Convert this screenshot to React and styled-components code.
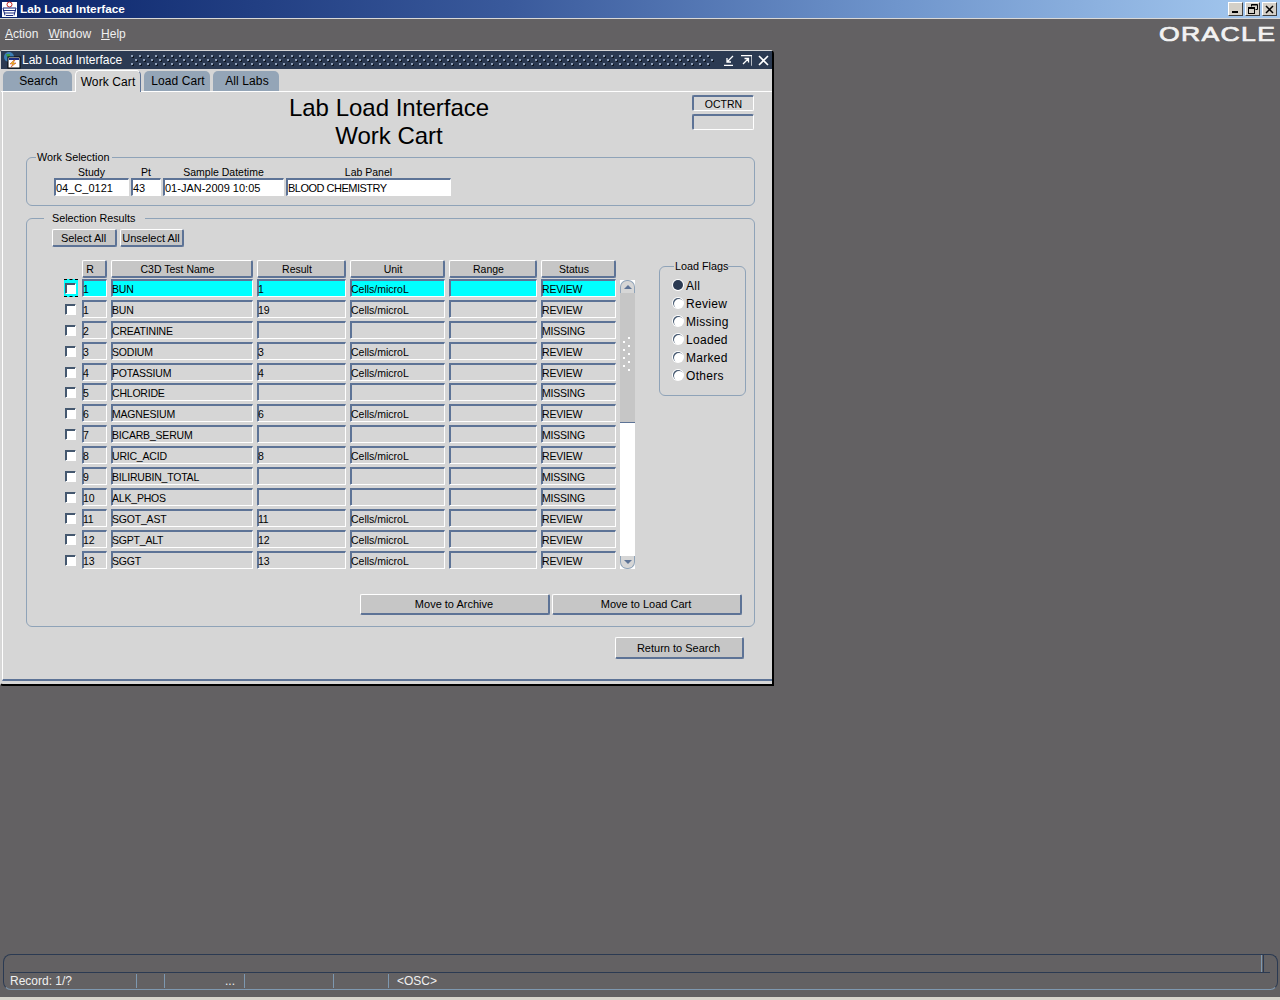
import React from 'react'
import styled, { createGlobalStyle } from 'styled-components'

const colors = {
  desktop: '#636163',
  panel: '#d6d6d6',
  button: '#c6c6c6',
  bevel: '#5d7396',
  line: '#8fa3b8',
  navy: '#2b3a52',
}

const GlobalStyle = createGlobalStyle`
  html, body { margin: 0; padding: 0; background: ${colors.desktop}; }
  body { font-family: "Liberation Sans", Arial, sans-serif; font-size: 11px; color: #000; }
  * { box-sizing: border-box; }
`

const Screen = styled.div`
  width: 1280px;
  height: 1000px;
  display: flex;
  flex-direction: column;
  background: ${colors.desktop};
  overflow: hidden;
`

const TitleBar = styled.div`
  height: 18px;
  flex: none;
  display: flex;
  align-items: center;
  padding-left: 1px;
  color: #fff;
  font-size: 11.8px;
  font-weight: bold;
  background: linear-gradient(90deg, #0a246a 0%, #3a5a9c 40%, #6f95cc 70%, #a6caf0 100%);
`

const TitleText = styled.span`
  margin-left: 2px;
  flex: 1;
`

const WinButtons = styled.div`
  display: flex;
  margin-right: 3px;
`

const WinButton = styled.div`
  width: 15px;
  height: 14px;
  margin-left: 2px;
  background: #d4d0c8;
  border: 1px solid;
  border-color: #fff #404040 #404040 #fff;
  display: flex;
  align-items: center;
  justify-content: center;
  svg { display: block; }
`

const MenuRow = styled.div`
  height: 32px;
  flex: none;
  display: flex;
  align-items: center;
  justify-content: space-between;
  padding: 0 4px 2px 5px;
  border-top: 1px solid #d8d8d8;
`

const Menu = styled.div`
  display: flex;
  gap: 10px;
  color: #f0f0f0;
  font-size: 12px;
  u { text-underline-offset: 1px; }
`

const OracleMark = styled.span`
  display: block;
  font-size: 20px;
  line-height: 18px;
  letter-spacing: 1px;
  color: #f2f2f2;
  -webkit-text-stroke: 0.7px #f2f2f2;
  transform: scaleX(1.33);
  transform-origin: right center;
`

const Desktop = styled.div`
  flex: 1;
  min-height: 0;
`

const FormWindow = styled.div`
  width: 774px;
  height: 636px;
  display: flex;
  flex-direction: column;
  background: ${colors.panel};
  border: 1px solid #d8d8d8;
  border-right: 2px solid #000;
  border-bottom: 2px solid #000;
  border-radius: 3px 4px 0 3px;
`

const WindowHeader = styled.div`
  height: 18px;
  flex: none;
  display: flex;
  align-items: center;
  padding: 0 3px 0 2px;
  background: ${colors.navy};
  color: #fff;
  font-size: 12px;
`

const HeaderTitle = styled.span`
  margin-left: 1px;
  white-space: nowrap;
`

const Gripper = styled.div`
  flex: 1;
  height: 12px;
  margin: 0 10px 0 9px;
  background-image:
    radial-gradient(circle at 1px 2px, #8fa0b8 1px, transparent 1px),
    radial-gradient(circle at 5px 6px, #8fa0b8 1px, transparent 1px),
    radial-gradient(circle at 2px 3px, #0f1722 1px, transparent 1px),
    radial-gradient(circle at 6px 7px, #0f1722 1px, transparent 1px);
  background-size: 8px 8px;
`

const HeaderIcons = styled.div`
  display: flex;
  align-items: center;
  gap: 6px;
  svg { display: block; }
`

const TabStrip = styled.div`
  height: 23px;
  flex: none;
  display: flex;
  align-items: flex-end;
  padding: 0 0 0 2px;
  gap: 3px;
  border-bottom: 1px solid #fff;
  background: ${colors.panel};
`

const Tab = styled.div`
  height: ${p => (p.$active ? '22px' : '20px')};
  width: ${p => p.$w}px;
  margin-bottom: ${p => (p.$active ? '-1px' : '0')};
  padding-left: ${p => (p.$active ? '0' : '2px')};
  display: flex;
  align-items: center;
  justify-content: center;
  font-size: 12px;
  letter-spacing: 0.1px;
  border-radius: 5px 5px 0 0;
  background: ${p => (p.$active ? colors.panel : '#94a5b7')};
  border-top: ${p => (p.$active ? '1px solid #fff' : 'none')};
  border-left: ${p => (p.$active ? '1px solid #fff' : 'none')};
  border-right: ${p => (p.$active ? `1px solid ${colors.bevel}` : 'none')};
`

const FormBody = styled.div`
  flex: 1;
  position: relative;
  display: flex;
  flex-direction: column;
  padding: 0 17px 0 23px;
  border-left: 1px solid #fff;
  margin-left: 1px;
  border-bottom: 2px solid ${colors.bevel};
  margin-bottom: 3px;
`

const Heading = styled.div`
  height: 59px;
  flex: none;
  display: flex;
  align-items: flex-start;
  padding-top: 2px;
`

const HeadingText = styled.div`
  width: 726px;
  text-align: center;
  font-size: 24px;
  line-height: 28px;
`

const SideBoxes = styled.div`
  position: absolute;
  top: 3px;
  left: 689px;
  display: flex;
  flex-direction: column;
  gap: 3px;
`

const SideBox = styled.div`
  width: 62px;
  height: 16px;
  display: flex;
  align-items: center;
  justify-content: center;
  font-size: 10.5px;
  border-style: solid;
  border-width: 2px 1px 1px 2px;
  border-color: ${colors.bevel} #fff #fff ${colors.bevel};
  border-radius: 2px;
`

const Group = styled.fieldset`
  margin: ${p => p.$top || 0}px 0 0;
  width: ${p => p.$w}px;
  height: ${p => p.$h}px;
  padding: 0;
  flex: none;
  border: 1px solid ${colors.line};
  border-radius: 6px;
`

const Legend = styled.legend`
  margin-left: ${p => p.$indent}px;
  padding: 0 ${p => p.$pad}px 0 ${p => p.$left || 1}px;
  font-size: 10.8px;
  line-height: 13px;
`

const WorkGrid = styled.div`
  display: grid;
  grid-template-columns: 75px 30px 121px 165px;
  column-gap: 2px;
  margin: 1px 0 0 27px;
`

const FieldLabel = styled.div`
  text-align: center;
  font-size: 10.5px;
  line-height: 14px;
  height: 13px;
`

const InputBox = styled.div`
  height: 18px;
  background: #fff;
  display: flex;
  align-items: center;
  font-size: 11px;
  letter-spacing: ${p => (p.$caps ? '-0.5px' : '0')};
  white-space: nowrap;
  overflow: hidden;
  border-style: solid;
  border-width: 2px 1px 1px 2px;
  border-color: ${colors.bevel} #fff #fff ${colors.bevel};
`

const ResultsTop = styled.div`
  display: flex;
  gap: 3px;
  margin: 4px 0 0 25px;
`

const Button = styled.button`
  font-family: inherit;
  font-size: 11px;
  color: #000;
  padding: 0 1px 0 0;
  width: ${p => p.$w}px;
  height: ${p => p.$h}px;
  background: ${colors.button};
  border-style: solid;
  border-width: 1px 2px 2px 1px;
  border-color: #fff ${colors.bevel} ${colors.bevel} #fff;
  border-radius: 2px;
`

const ResultsBody = styled.div`
  display: flex;
  margin: 15px 0 0 37px;
  align-items: flex-start;
`

const TableGrid = styled.div`
  display: grid;
  grid-template-columns: 14px 25px 142px 89px 95px 88px 75px;
  grid-template-rows: 14px repeat(4, 18px) 17px repeat(9, 18px);
  column-gap: 4px;
  row-gap: 3px;
`

const HeadCell = styled(Button)`
  width: auto;
  height: 18px;
  margin-top: -2px;
  padding-right: 8px;
  font-size: 10.5px;
`

const CheckCell = styled.div`
  display: flex;
  align-items: center;
  padding-left: 1px;
  width: 14px;
  height: 18px;
  ${p => p.$focus && `
    background: #00ffff;
    border-top: 1px dashed #000;
    border-bottom: 1px dashed #000;
  `}
`

const Check = styled.span`
  display: block;
  width: 11px;
  height: 11px;
  background: #fff;
  border-style: solid;
  border-width: 1px;
  border-color: #45586f #fff #fff #45586f;
  box-shadow: inset 1px 1px 0 #45586f;
`

const Cell = styled.div`
  height: 18px;
  display: flex;
  align-items: center;
  font-size: 10.5px;
  letter-spacing: ${p => (p.$plain ? '0' : '-0.2px')};
  white-space: nowrap;
  overflow: hidden;
  background: ${p => (p.$current ? '#00ffff' : colors.panel)};
  border-style: solid;
  border-width: 2px 1px 1px 1px;
  border-color: ${colors.bevel} #fff #fff ${colors.bevel};
  box-shadow: inset 1px 0 0 ${colors.bevel};
`

const Scroller = styled.div`
  width: 15px;
  height: 289px;
  margin: 18px 0 0 4px;
  display: flex;
  flex-direction: column;
  background: #fff;
  flex: none;
`

const ScrollEnd = styled.div`
  height: 13px;
  flex: none;
  display: flex;
  align-items: center;
  justify-content: center;
  background: ${colors.panel};
  border: 1px solid ${colors.line};
  border-width: ${p => (p.$up ? '1px 1px 0 1px' : '0 1px 1px 1px')};
  border-radius: ${p => (p.$up ? '7px 7px 0 0' : '0 0 7px 7px')};
`

const Arrow = styled.span`
  width: 0;
  height: 0;
  border-left: 4px solid transparent;
  border-right: 4px solid transparent;
  ${p => (p.$up ? `border-bottom: 4px solid ${colors.bevel};` : `border-top: 4px solid ${colors.bevel};`)}
`

const Thumb = styled.div`
  height: 130px;
  flex: none;
  position: relative;
  background: ${colors.button};
  border-bottom: 1px solid ${colors.bevel};
`

const ThumbDots = styled.div`
  position: absolute;
  left: 3px;
  top: 44px;
  width: 8px;
  height: 34px;
  background:
    radial-gradient(circle at 1px 5px, #fff 1px, transparent 1px) 0 0 / 10px 8px,
    radial-gradient(circle at 6px 1px, #fff 1px, transparent 1px) 0 0 / 10px 8px;
`

const ScrollTrack = styled.div`
  flex: 1;
  background: #fff;
`

const FlagsGroup = styled(Group)`
  margin: -2px 0 0 24px;
  padding: 4px 0 0 13px;
  display: block;
`

const FlagRow = styled.div`
  height: 18px;
  display: flex;
  align-items: center;
  gap: 3px;
  font-size: 12px;
  letter-spacing: 0.3px;
`

const Radio = styled.span`
  width: 10px;
  height: 10px;
  flex: none;
  margin-top: -3px;
  border-radius: 50%;
  background: ${p => (p.$on ? colors.navy : '#fff')};
  box-shadow: ${p => (p.$on ? '0 0 0 1px #fff' : 'inset 1px 1px 0 #45586f, 0 0 0 1px #fff')};
`

const MoveRow = styled.div`
  display: flex;
  gap: 2px;
  margin: 25px 0 0 333px;
`

const ReturnRow = styled.div`
  display: flex;
  margin: 10px 0 0 589px;
`

const StatusWrap = styled.div`
  flex: none;
  height: 36px;
  margin: 0 2px 7px 3px;
  display: flex;
  flex-direction: column;
  border: 1px solid ${colors.navy};
  border-bottom: 1px solid #7e98b0;
  border-radius: 8px;
`

const StatusTop = styled.div`
  height: 18px;
  flex: none;
  display: flex;
  justify-content: flex-end;
  padding-right: 6px;
  margin: 0 7px 0 6px;
  border-bottom: 1px solid ${colors.navy};
`

const StatusGrip = styled.div`
  width: 3px;
  height: 17px;
  border-left: 1px solid #7e98b0;
  border-right: 1px solid ${colors.navy};
`

const StatusCells = styled.div`
  flex: 1;
  display: flex;
  align-items: center;
  color: #f0f0f0;
  font-size: 12px;
  padding-left: 6px;
`

const StatusCell = styled.div`
  width: ${p => p.$w}px;
  height: 14px;
  line-height: 14px;
  flex: none;
  text-align: ${p => p.$align || 'left'};
  border-right: ${p => (p.$sep ? '1px solid #7e98b0' : 'none')};
  padding-right: ${p => (p.$align === 'right' ? '9px' : 0)};
  padding-left: ${p => (p.$inset ? '8px' : 0)};
  white-space: nowrap;
`

const BottomEdge = styled.div`
  flex: none;
  height: 3px;
  background: #d8d5cd;
`

const rows = [
  ['1', 'BUN', '1', 'Cells/microL', 'REVIEW'],
  ['1', 'BUN', '19', 'Cells/microL', 'REVIEW'],
  ['2', 'CREATININE', '', '', 'MISSING'],
  ['3', 'SODIUM', '3', 'Cells/microL', 'REVIEW'],
  ['4', 'POTASSIUM', '4', 'Cells/microL', 'REVIEW'],
  ['5', 'CHLORIDE', '', '', 'MISSING'],
  ['6', 'MAGNESIUM', '6', 'Cells/microL', 'REVIEW'],
  ['7', 'BICARB_SERUM', '', '', 'MISSING'],
  ['8', 'URIC_ACID', '8', 'Cells/microL', 'REVIEW'],
  ['9', 'BILIRUBIN_TOTAL', '', '', 'MISSING'],
  ['10', 'ALK_PHOS', '', '', 'MISSING'],
  ['11', 'SGOT_AST', '11', 'Cells/microL', 'REVIEW'],
  ['12', 'SGPT_ALT', '12', 'Cells/microL', 'REVIEW'],
  ['13', 'SGGT', '13', 'Cells/microL', 'REVIEW'],
]

const flags = ['All', 'Review', 'Missing', 'Loaded', 'Marked', 'Others']

function AppIcon() {
  return (
    <svg width="17" height="17" viewBox="0 0 17 17">
      <rect x="1" y="1" width="15" height="15" fill="#fff" />
      <circle cx="8.5" cy="3.5" r="2.5" fill="none" stroke="#c02020" strokeWidth="1" />
      <path d="M2 7h13M2 9.5h13M3 12h11M5 14.5h7" stroke="#1c2c80" strokeWidth="1.2" />
      <path d="M2 7l2 7.5M15 7l-2 7.5" stroke="#1c2c80" strokeWidth="1" />
    </svg>
  )
}

function FormIcon() {
  return (
    <svg width="18" height="18" viewBox="0 0 18 18">
      <circle cx="6" cy="6" r="5" fill="#3d7fb8" />
      <path d="M3 3h4v3H4z" fill="#3c9a4a" />
      <rect x="5" y="6" width="12" height="11" fill="#fff" stroke="#000" />
      <rect x="6" y="7" width="10" height="2" fill="#1c2c80" />
      <path d="M11 9l-4 4h3l-2 3 5-4h-3l2-3z" fill="#f0d020" stroke="#c03020" strokeWidth="0.5" />
    </svg>
  )
}

function App() {
  return (
    <Screen>
      <GlobalStyle />
      <TitleBar>
        <AppIcon />
        <TitleText>Lab Load Interface</TitleText>
        <WinButtons>
          <WinButton>
            <svg width="9" height="9" viewBox="0 0 9 9"><rect x="1" y="6" width="6" height="2" fill="#000" /></svg>
          </WinButton>
          <WinButton>
            <svg width="10" height="10" viewBox="0 0 10 10" fill="none" stroke="#000">
              <path d="M3.5 2.5V.5h6v5h-2" />
              <path d="M3 1h6" />
              <rect x=".5" y="3.5" width="6" height="6" />
              <path d="M0 4.5h7" />
            </svg>
          </WinButton>
          <WinButton>
            <svg width="9" height="9" viewBox="0 0 9 9" stroke="#000" strokeWidth="1.5"><path d="M1 1l7 7M8 1l-7 7" /></svg>
          </WinButton>
        </WinButtons>
      </TitleBar>

      <MenuRow>
        <Menu>
          <span><u>A</u>ction</span>
          <span><u>W</u>indow</span>
          <span><u>H</u>elp</span>
        </Menu>
        <OracleMark>ORACLE</OracleMark>
      </MenuRow>

      <Desktop>
        <FormWindow>
          <WindowHeader>
            <FormIcon />
            <HeaderTitle>Lab Load Interface</HeaderTitle>
            <Gripper />
            <HeaderIcons>
              <svg width="11" height="11" viewBox="0 0 11 11" fill="none" stroke="#fff" strokeWidth="1.3">
                <path d="M0 10.3h9M9 1L3.5 6.5M3 3v4h4" />
              </svg>
              <svg width="11" height="11" viewBox="0 0 11 11" fill="none" stroke="#fff" strokeWidth="1.3">
                <path d="M0 .7h11v10M2 9l5.5-5.5M3.5 3.5h4v4" />
              </svg>
              <svg width="11" height="11" viewBox="0 0 11 11" stroke="#fff" strokeWidth="1.6">
                <path d="M1 1l9 9M10 1l-9 9" />
              </svg>
            </HeaderIcons>
          </WindowHeader>

          <TabStrip>
            <Tab $w={69}>Search</Tab>
            <Tab $w={66} $active>Work Cart</Tab>
            <Tab $w={66}>Load Cart</Tab>
            <Tab $w={66}>All Labs</Tab>
          </TabStrip>

          <FormBody>
            <Heading>
              <HeadingText>Lab Load Interface<br />Work Cart</HeadingText>
              <SideBoxes>
                <SideBox>OCTRN</SideBox>
                <SideBox />
              </SideBoxes>
            </Heading>

            <Group $w={729} $h={55}>
              <Legend $indent={9} $pad={3}>Work Selection</Legend>
              <WorkGrid>
                <FieldLabel>Study</FieldLabel>
                <FieldLabel>Pt</FieldLabel>
                <FieldLabel>Sample Datetime</FieldLabel>
                <FieldLabel>Lab Panel</FieldLabel>
                <InputBox>04_C_0121</InputBox>
                <InputBox>43</InputBox>
                <InputBox>01-JAN-2009 10:05</InputBox>
                <InputBox $caps>BLOOD CHEMISTRY</InputBox>
              </WorkGrid>
            </Group>

            <Group $w={729} $h={415} $top={6}>
              <Legend $indent={17} $left={8} $pad={10}>Selection Results</Legend>
              <ResultsTop>
                <Button $w={65} $h={18}>Select All</Button>
                <Button $w={64} $h={18}>Unselect All</Button>
              </ResultsTop>
              <ResultsBody>
                <TableGrid>
                  <span />
                  <HeadCell>R</HeadCell>
                  <HeadCell>C3D Test Name</HeadCell>
                  <HeadCell>Result</HeadCell>
                  <HeadCell>Unit</HeadCell>
                  <HeadCell>Range</HeadCell>
                  <HeadCell>Status</HeadCell>
                  {rows.map((row, i) => (
                    <React.Fragment key={i}>
                      <CheckCell $focus={i === 0}><Check /></CheckCell>
                      <Cell $current={i === 0}>{row[0]}</Cell>
                      <Cell $current={i === 0}>{row[1]}</Cell>
                      <Cell $current={i === 0}>{row[2]}</Cell>
                      <Cell $current={i === 0} $plain>{row[3]}</Cell>
                      <Cell $current={i === 0} />
                      <Cell $current={i === 0}>{row[4]}</Cell>
                    </React.Fragment>
                  ))}
                </TableGrid>
                <Scroller>
                  <ScrollEnd $up><Arrow $up /></ScrollEnd>
                  <Thumb><ThumbDots /></Thumb>
                  <ScrollTrack />
                  <ScrollEnd><Arrow /></ScrollEnd>
                </Scroller>
                <FlagsGroup $w={87} $h={136}>
                  <Legend $indent={1} $pad={0}>Load Flags</Legend>
                  {flags.map((f, i) => (
                    <FlagRow key={f}>
                      <Radio $on={i === 0} />
                      {f}
                    </FlagRow>
                  ))}
                </FlagsGroup>
              </ResultsBody>
              <MoveRow>
                <Button $w={190} $h={21}>Move to Archive</Button>
                <Button $w={190} $h={21}>Move to Load Cart</Button>
              </MoveRow>
            </Group>

            <ReturnRow>
              <Button $w={129} $h={22}>Return to Search</Button>
            </ReturnRow>
          </FormBody>
        </FormWindow>
      </Desktop>

      <StatusWrap>
        <StatusTop><StatusGrip /></StatusTop>
        <StatusCells>
          <StatusCell $w={127} $sep>Record: 1/?</StatusCell>
          <StatusCell $w={28} $sep />
          <StatusCell $w={80} $sep $align="right">...</StatusCell>
          <StatusCell $w={89} $sep />
          <StatusCell $w={55} $sep />
          <StatusCell $w={120} $inset>&lt;OSC&gt;</StatusCell>
        </StatusCells>
      </StatusWrap>
      <BottomEdge />
    </Screen>
  )
}

export default App
